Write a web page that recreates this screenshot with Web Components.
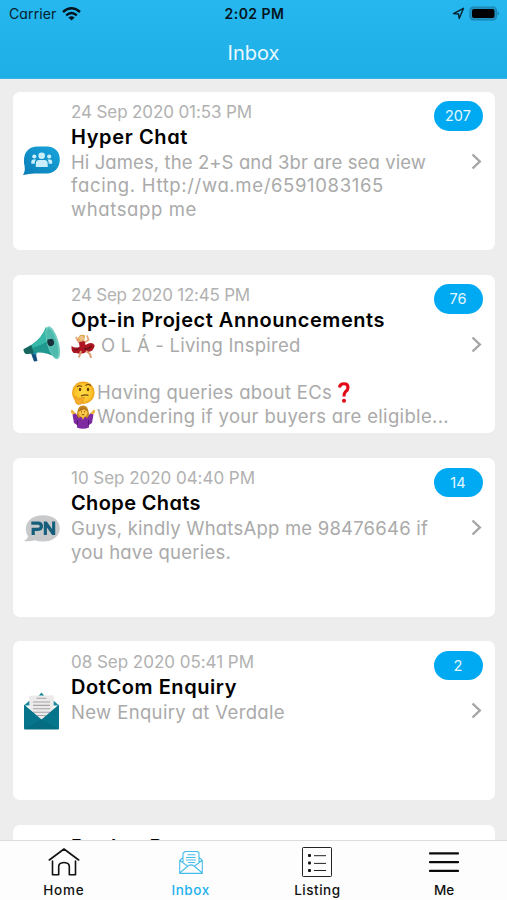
<!DOCTYPE html>
<html lang="en">
<head>
<meta charset="utf-8">
<title>Inbox</title>
<style>
  html, body { margin: 0; height: 100%; }
  body { font-family: Inter, "Open Sans", "Liberation Sans", sans-serif; font-feature-settings: "cv11" 1; overflow: hidden; background: #ededed; }
</style>
</head>
<body>
<inbox-app></inbox-app>
<script>
const define = (name, html, setup) => {
  const tpl = document.createElement('template');
  tpl.innerHTML = html;
  customElements.define(name, class extends HTMLElement {
    connectedCallback() {
      if (this.shadowRoot) return;
      this.attachShadow({ mode: 'open' }).append(tpl.content.cloneNode(true));
      if (setup) setup(this, this.shadowRoot);
    }
  });
};

/* Text tracked out so that its line takes the given width. */
define('fit-text', `<style>
  :host { display: inline-block; white-space: pre; }
</style><span><slot></slot></span>`, (el, root) => {
  const span = root.querySelector('span');
  const n = el.textContent.length;
  const w = span.getBoundingClientRect().width;
  span.style.letterSpacing = ((Number(el.getAttribute('w')) - w) / n).toFixed(3) + 'px';
});

const ICONS = {
  people: `<svg viewBox="0 0 37 40"><defs><linearGradient id="g" x1="0" y1="1" x2="1" y2="0"><stop offset="0" stop-color="#0b7db6"/><stop offset="1" stop-color="#18a5dd"/></linearGradient></defs>
    <path d="M0 34 C1.6 31.5 2.2 29 1.6 25 C.6 22 1 18 1.2 16.500 C2.500 9 8 5.500 14 5.500 H24 C32 5.500 36.800 11 36.800 18.500 C36.800 27 31 32.500 24 32.500 H12 C8 32.400 5 33.500 0 34Z" fill="url(#g)"/>
    <g fill="#c9effc"><circle cx="18.700" cy="14.800" r="3.300"/><circle cx="11.300" cy="15.500" r="2.100"/><circle cx="26.200" cy="15.500" r="2.100"/><path d="M12.800 26 V23 Q12.800 19.200 16 19.100 H21.500 Q24.700 19.200 24.700 23 V26Z"/><path d="M8.300 22.700 V20.700 Q8.300 18.500 10.300 18.500 H13 Q11.700 20 11.700 22.700Z M29.200 22.700 V20.700 Q29.200 18.500 27.200 18.500 H24.500 Q25.800 20 25.800 22.700Z"/></g></svg>`,
  horn: `<svg viewBox="0 0 37 40">
    <path d="M7.500 28 L12 26.500 L14.500 37 L11 37.500Z" fill="#154f7c"/><path d="M9 29.500 L14 27.500 L13.300 31Z" fill="#1c96b2"/>
    <path d="M1 25 L9 20.500 Q19 14 23 3 L34 34 Q21 27 11 29 L4 30 Q1 30 1 25Z" fill="#20978f"/>
    <path d="M.3 25.500 L8 21.300 L11 29 L4 30 Q1.400 30 .3 25.500Z" fill="#16665f"/>
    <path d="M9 20.500 Q19 14 23 3 L27 16 Q19 21 9.500 24Z" fill="#36b7a8"/>
    <ellipse cx="29.800" cy="18.800" rx="5.800" ry="17" transform="rotate(-16 29.800 18.800)" fill="#75cfc3"/>
    <ellipse cx="29.300" cy="19" rx="4.600" ry="15.200" transform="rotate(-16 29.300 19)" fill="#4fbbae"/>
    <path d="M24.500 15.500 L29 14.700 Q31.500 16 31 20 Q30 22.500 26.500 22.200 Q23.500 20 24.500 15.500Z" fill="#17323b"/></svg>`,
  pn: `<svg viewBox="0 0 37 40">
    <path d="M.8 33 Q4.500 31.500 5 28.300 Q2.800 25 2.800 21 C3 12.500 10 7.300 20 7.300 C30 7.300 36.800 12.600 36.800 20.300 C36.800 28.500 29.500 33.600 20 33.600 Q15 33.600 12 32.200 Q7 34 .8 33Z" fill="#c8c9cb"/>
    <g fill="none" stroke="#165f7c" stroke-width="3.200"><path d="M8.300 15.200 H15 Q18.400 15.200 18.400 18.300 Q18.400 21.300 15 21.300 H10.200 V27"/></g><path d="M20.800 27 V13.600 H23.800 L29.100 21 V13.600 H32.200 V27 H29.200 L23.900 19.600 V27Z" fill="#165f7c"/></svg>`,
  mail: `<svg viewBox="0 0 37 40">
    <path d="M1 14.500 L6 10 H31 L36 14.500Z M15.500 5 L18.500 1.500 L21.500 5Z" fill="#15889a"/>
    <path d="M6.300 4.800 L30.700 4.300 V22 L18.500 32 L6.300 22Z" fill="#eceaea"/>
    <path d="M13.500 7.200h10M10 11h17M10 14.400h17M10 17.800h17M10 21.200h17M14 24.500h9" stroke="#a5a5a8" stroke-width="1.100"/>
    <path d="M1 13.500 L18.500 28.500 L36 13.500 V37.500 Q36 38.500 35 38.500 H2 Q1 38.500 1 37.500Z" fill="#06748a"/><path d="M1.500 38 L18.500 28.500 L35.500 38" fill="#066c82"/></svg>`,
  dancer: `<svg viewBox="0 0 24 24"><path d="M7 4 Q9 -1 14 1.500 L13 8 L7 7Z" fill="#d6a13a"/><circle cx="10.500" cy="4.300" r="2.500" fill="#f2c08c"/><path d="M5 3 L7.500 8 L11 9 M13 9 L17.500 6 L16 1.500" stroke="#e2a679" stroke-width="1.800" fill="none"/><path d="M8 8 L13.500 7 L14.500 11 Q21 7 23.700 11.500 Q22 19 16 17.500 Q11 21 5 19 Q0 20 .5 12 Q4 14.500 8.500 13Z" fill="#ad1522"/><path d="M10 17 L8 23.500 M15 17 L19 20 L20 24" stroke="#dc9c74" stroke-width="2" fill="none"/><path d="M3 15.500 Q6 16.500 8 14 M13 15 Q18 15 20.500 12" stroke="#681019" stroke-width="1.300" fill="none"/></svg>`,
  think: `<svg viewBox="0 0 24 24"><defs><radialGradient id="t"><stop offset="0" stop-color="#ffdb48"/><stop offset=".75" stop-color="#fbc52b"/><stop offset="1" stop-color="#ee9f18"/></radialGradient></defs><circle cx="12.300" cy="11.700" r="11.200" fill="url(#t)"/><ellipse cx="9" cy="8.500" rx="1.200" ry="1.700" fill="#5d3909"/><ellipse cx="17" cy="8.500" rx="1.200" ry="1.700" fill="#5d3909"/><path d="M6 5.700 Q8.500 4 11 5.500 M14.500 4.500 Q17 2.500 20 4.500 M10 15 Q14 13 17.500 14.500" stroke="#70450e" stroke-width="1.100" fill="none"/><path d="M4.500 15.500 Q6 15 7 18 L13 16 Q15 16.500 12 18.500 L12 21 Q10.500 24 7 23.500 Q3 22.500 4.500 15.500Z" fill="#f6ac2c" stroke="#e18e18" stroke-width=".6"/></svg>`,
  shrug: `<svg viewBox="0 0 24 24"><path d="M6 13 Q5.500 .5 12 .5 Q18.500 .5 18 13Z" fill="#c98a21"/><path d="M0 5.500 L4.500 10 M24 5.500 L19.500 10" stroke="#eeb43c" stroke-width="2.800"/><path d="M1.500 9.500 L5 8.500 L7.500 13 L10 12 H14 L16.500 13 L19 8.500 L22.500 9.500 L21 18 L18 20 V22.500 Q12 25 6 22.500 V20 L3 18Z" fill="#7e2aa0"/><path d="M6.500 15 V20 M17.500 15 V20" stroke="#561774"/><path d="M10 11 H14 L12 15Z" fill="#efb039"/><circle cx="12" cy="7.500" r="4.500" fill="#fac844"/><path d="M7 7 Q8.500 1.500 13 2.500 Q16.500 3.500 17 7 L13 4.300Z" fill="#b4741d"/><path d="M10 6.800h1M13 6.800h1M10.700 9.700h2.600" stroke="#704416" stroke-width=".9"/></svg>`,
  question: `<svg viewBox="0 0 24 24"><path d="M7.500 6.500 Q8 2.800 12 2.800 Q16 2.800 16 6.500 Q16 9 13.500 10.800 Q12 12 12 15.500" fill="none" stroke="#e20a17" stroke-width="3.100"/><circle cx="12" cy="19.800" r="2" fill="#e20a17"/></svg>`,
  home: `<svg viewBox="0 0 32 32" fill="none" stroke="#111" stroke-width="1.600" stroke-linecap="round" stroke-linejoin="round"><path d="M1.300 14 L16 3 L30.700 14 M4.500 15 V28.700 H10.700 V20.500 Q10.700 17.500 13.500 17 Q16 16 18.500 17 Q21.300 17.500 21.300 20.500 V28.700 H27.500 V15"/></svg>`,
  inbox: `<svg viewBox="0 0 32 32" fill="none" stroke="#48bdeb" stroke-width="1.100" stroke-linejoin="round"><path d="M8 11.500 L4.700 14.300 V27.400 H27.300 V14.300 L24 11.500 M8 17 V7.300 L10.200 5.500 H22.400 L24 7 V17 M4.700 14.300 L13 20.500 M27.300 14.300 L19 20.500 M4.700 27 L13 20 Q16 17.800 19 20 L27.300 27 M12.500 8.700h8M11 11.500h9.500M11 14h10M13 16.500h7"/></svg>`,
  list: `<svg viewBox="0 0 32 32" fill="none" stroke="#222" stroke-width="1"><rect x="1.500" y="1.500" width="29" height="29" rx=".8"/><path d="M13 9.700h12M13 17.400h12M13 24.500h12"/><g fill="#111" stroke="none"><rect x="7" y="8" width="3" height="3" rx="1"/><rect x="7" y="15.500" width="3" height="3" rx="1"/><rect x="7" y="23" width="3" height="3" rx="1"/></g></svg>`,
  menu: `<svg viewBox="0 0 32 32" stroke="#0c0c0c" stroke-width="2.200" stroke-linecap="round"><path d="M2 7.400h28M2 16.200h28M2 24.900h28"/></svg>`
};

define('app-icon', `<style>
  :host { display: inline-block; flex: none; }
  svg { display: block; width: 100%; height: 100%; }
</style>`, (el, root) => {
  root.append(document.createRange().createContextualFragment(ICONS[el.getAttribute('name')] || ''));
});

define('status-bar', `<style>
  :host { display: grid; grid-template-columns: 1fr auto 1fr; align-items: center; height: 28px; padding: 0 7px 0 9px; font-size: 14px; line-height: 28px; color: #06202b; }
  .l, .r { display: flex; align-items: center; } .r { justify-content: flex-end; gap: 4px; }
  .l { gap: 5px; } b { font-weight: 600; color: #04141c; }
  svg { display: block; margin-bottom: 1px; }
</style>
<div class="l"><fit-text w="47.5">Carrier</fit-text>
<svg width="19" height="14" viewBox="0 0 19 14"><g fill="none" stroke="#03131b" stroke-width="2.400"><path d="M1 5 Q9.500 -2.300 18 5"/><path d="M4.200 8.300 Q9.500 3.700 14.800 8.300"/></g><path d="M9.500 13.500 L6.400 10.400 Q9.500 8 12.600 10.400Z" fill="#03131b"/></svg></div>
<b><fit-text w="60">2:02 PM</fit-text></b>
<div class="r"><svg width="13" height="13" viewBox="0 0 13 13"><path d="M1.500 6.600 L11.500 1.300 L7.200 11.500 L6.500 7Z" fill="none" stroke="#06202b" stroke-width="1.400" stroke-linejoin="round"/></svg>
<svg width="31" height="15" viewBox="0 0 31 15"><rect x="1" y="1" width="26.500" height="12.800" rx="3.600" fill="#1e93c4" stroke="#1b83ae" stroke-width="1.200"/><rect x="3" y="3" width="22.500" height="9" rx="2" fill="#000"/><path d="M28.700 5.200 Q31 7.400 28.700 9.600Z" fill="#17769b"/></svg></div>`);

define('nav-header', `<style>
  :host { display: block; flex: none; height: 79px; box-sizing: border-box; background: linear-gradient(#26b7ee, #1eafe7); border-bottom: 1px solid #35b4e6; }
  .title { height: 50px; line-height: 50px; text-align: center; font-size: 20px; color: #e9f9ff; }
</style>
<status-bar></status-bar><div class="title"><fit-text w="53.5"><slot></slot></fit-text></div>`, (el, root) => {
  root.querySelector('fit-text').textContent = el.textContent;
});

define('message-card', `<style>
  :host { display: grid; grid-template-columns: 48px 1fr auto; flex: none; height: 158.600px; box-sizing: border-box; padding: 0 12px 0 10px; border-radius: 7px; background: #fff; overflow: hidden; }
  app-icon { width: 37px; height: 40px; margin-top: 49.500px; }
  .text { padding-top: 8.300px; min-width: 0; white-space: nowrap; }
  .date { height: 24px; line-height: 24px; font-size: 17px; color: #b1b1b1; }
  .title { height: 26px; line-height: 26px; font-size: 20px; font-weight: 600; color: #000; }
  .body { margin-top: 1px; font-size: 18.500px; color: #aaa; }
  .side { display: flex; flex-direction: column; align-items: flex-end; padding-top: 9.500px; }
  .badge { width: 49px; height: 29.500px; line-height: 29.500px; border-radius: 15px; text-align: center; background: #00aaf2; color: #e4f7ff; font-size: 14.500px; }
  .side svg { margin: 22px 1px 0 0; }
  :host([plain]) .date, :host([plain]) .side, :host([plain]) app-icon { display: none; }
  :host([plain]) .text { grid-column: 2; padding-top: 9.800px; }
</style>
<app-icon></app-icon>
<div class="text"><div class="date"><slot name="date"></slot></div><div class="title"><slot name="title"></slot></div><div class="body"><slot></slot></div></div>
<div class="side"><div class="badge"><slot name="count"></slot></div>
<svg width="11" height="17" viewBox="0 0 11 17"><path d="M1.500 1.500 L8.800 8.500 L1.500 15.500" fill="none" stroke="#a5a5a5" stroke-width="2.400"/></svg></div>`, (el, root) => {
  if (el.hasAttribute('plain')) return;
  const icon = document.createElement('app-icon');
  icon.setAttribute('name', el.getAttribute('icon'));
  root.querySelector('app-icon').replaceWith(icon);
});

define('body-line', `<style>
  :host { display: flex; align-items: center; height: 23.600px; line-height: 23.600px; white-space: pre; }
  ::slotted(app-icon) { width: 24px; height: 24px; margin-right: 2px; }
</style><slot></slot>`);

define('tab-item', `<style>
  :host { display: flex; flex: 1; flex-direction: column; align-items: center; color: #111; }
  :host([active]) { color: #1eb2ed; }
  app-icon { display: block; width: 32px; height: 32px; margin: 5px 0 0 1px; }
  .label { height: 18px; line-height: 18px; margin-top: 3px; padding-left: 1px; font-size: 13.500px; font-weight: 500; }
</style><div class="icon"></div><div class="label"><slot></slot></div>`, (el, root) => {
  const icon = document.createElement('app-icon');
  icon.setAttribute('name', el.getAttribute('icon'));
  root.querySelector('.icon').append(icon);
});

define('tab-bar', `<style>
  :host { display: flex; flex: none; height: 60px; box-sizing: border-box; border-top: 1px solid #dcdcdc; background: #fdfdfd; }
</style><slot></slot>`);

define('inbox-app', `<style>
  :host { display: flex; flex-direction: column; width: 507px; height: 900px; background: #ededed; }
  main { flex: 1; min-height: 0; overflow: hidden; display: flex; flex-direction: column; gap: 24.700px; padding: 12.500px 12.500px 0 13px; }
</style>
<nav-header>Inbox</nav-header>
<main>
  <message-card icon="people">
    <fit-text slot="date" w="181">24 Sep 2020 01:53 PM</fit-text><fit-text slot="title" w="117">Hyper Chat</fit-text><span slot="count">207</span>
    <body-line><fit-text w="355">Hi James, the 2+S and 3br are sea view</fit-text></body-line>
    <body-line><fit-text w="313">facing. Http://wa.me/6591083165</fit-text></body-line>
    <body-line><fit-text w="126">whatsapp me</fit-text></body-line>
  </message-card>
  <message-card icon="horn">
    <fit-text slot="date" w="179">24 Sep 2020 12:45 PM</fit-text><fit-text slot="title" w="314">Opt-in Project Announcements</fit-text><span slot="count">76</span>
    <body-line><app-icon name="dancer" style="margin-right:0.5px"></app-icon><fit-text w="205"> O L Á - Living Inspired</fit-text></body-line>
    <body-line></body-line>
    <body-line><app-icon name="think"></app-icon><fit-text w="235">Having queries about ECs</fit-text><app-icon name="question"></app-icon></body-line>
    <body-line><app-icon name="shrug"></app-icon><fit-text w="352">Wondering if your buyers are eligible...</fit-text></body-line>
  </message-card>
  <message-card icon="pn">
    <fit-text slot="date" w="184">10 Sep 2020 04:40 PM</fit-text><fit-text slot="title" w="130">Chope Chats</fit-text><span slot="count">14</span>
    <body-line><fit-text w="357">Guys, kindly WhatsApp me 98476646 if</fit-text></body-line>
    <body-line><fit-text w="160">you have queries.</fit-text></body-line>
  </message-card>
  <message-card icon="mail">
    <fit-text slot="date" w="183">08 Sep 2020 05:41 PM</fit-text><fit-text slot="title" w="166">DotCom Enquiry</fit-text><span slot="count">2</span>
    <body-line><fit-text w="214">New Enquiry at Verdale</fit-text></body-line>
  </message-card>
  <message-card plain><fit-text slot="title" w="125">Banker Pros</fit-text></message-card>
</main>
<tab-bar>
  <tab-item icon="home"><fit-text w="41.5">Home</fit-text></tab-item>
  <tab-item icon="inbox" active><fit-text w="38.5">Inbox</fit-text></tab-item>
  <tab-item icon="list"><fit-text w="46.5">Listing</fit-text></tab-item>
  <tab-item icon="menu"><fit-text w="20.5">Me</fit-text></tab-item>
</tab-bar>`);
</script>
</body>
</html>
